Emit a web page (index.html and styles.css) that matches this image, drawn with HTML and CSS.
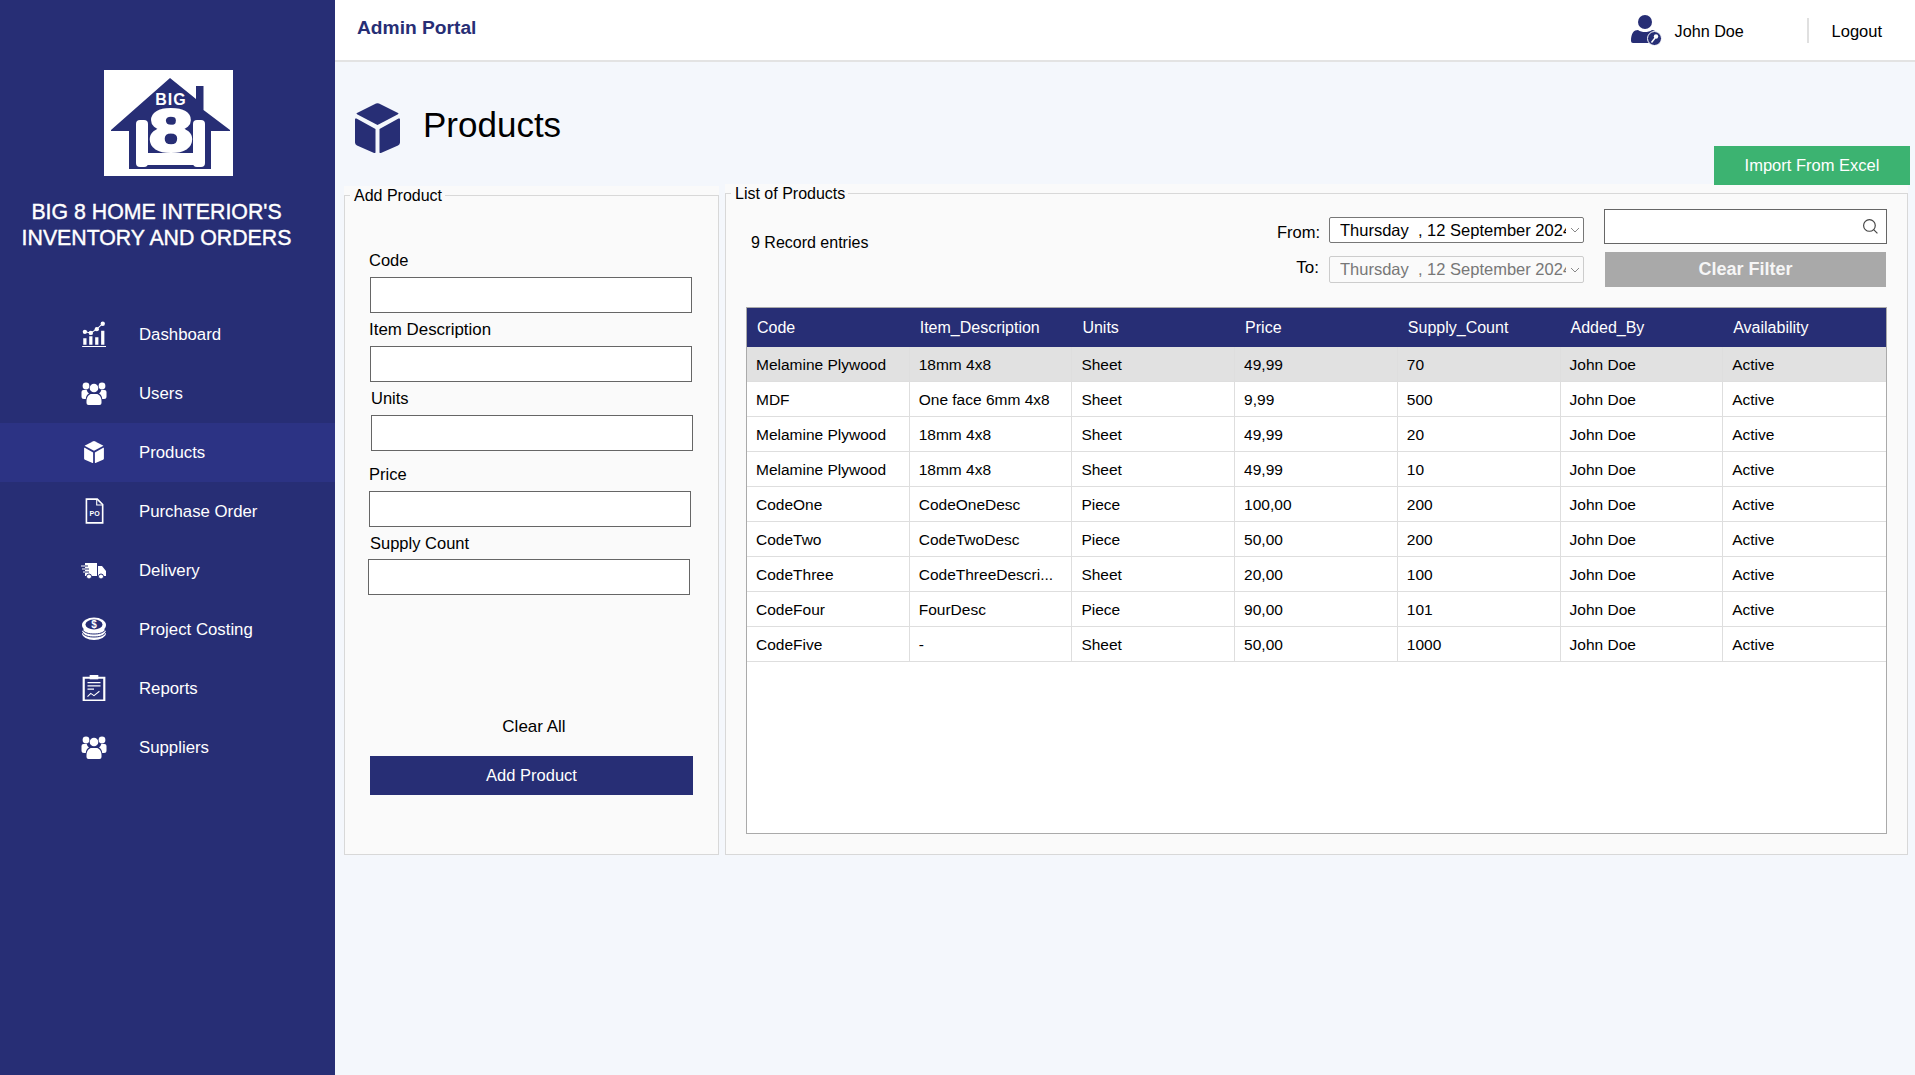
FILE: index.html
```html
<!DOCTYPE html>
<html lang="en">
<head>
<meta charset="utf-8">
<title>Products</title>
<link rel="stylesheet" href="styles.css">
</head>
<body>
<svg class="defs" width="0" height="0" aria-hidden="true">
  <symbol id="cube" viewBox="0 0 45 50">
    <path d="M21 .6a3.5 3.5 0 0 1 3 0L43 10a.7.7 0 0 1 0 1.2L22.500 22 2 11.200A.7.7 0 0 1 2 10z"/>
    <path d="M0 16.500a1 1 0 0 1 1.500-.9L20.500 26v23a1 1 0 0 1-1.400.9L2 42.500Q0 41.500 0 39.500z"/>
    <path d="M45 16.500a1 1 0 0 0-1.500-.9L24.500 26v23a1 1 0 0 0 1.400.9L43 42.500q2-1 2-3z"/>
  </symbol>
  <symbol id="people" viewBox="0 0 26 24">
    <circle cx="5" cy="5" r="3.400"/><circle cx="21" cy="5" r="3.400"/><circle cx="13" cy="7" r="4.300"/>
    <path d="M.5 11a2 2 0 0 1 2-2h3.200a6 6 0 0 0 2.300 3.600c-1.700 1-3 2.500-3.200 5.400H3a2.500 2.500 0 0 1-2.500-2.500z"/>
    <path d="M25.500 11a2 2 0 0 0-2-2h-3.200a6 6 0 0 1-2.300 3.600c1.700 1 3 2.500 3.200 5.400H23a2.500 2.500 0 0 0 2.500-2.500z"/>
    <path d="M5.500 20c0-4.500 3-7 5-7h5c2 0 5 2.500 5 7v2a2 2 0 0 1-2 2h-11a2 2 0 0 1-2-2z"/>
  </symbol>
  <symbol id="chev" viewBox="0 0 10 6"><path d="M1 1l4 4 4-4" fill="none" stroke="currentColor"/></symbol>
</svg>

<aside class="sidebar">
  <div class="logo">
    <svg viewBox="0 0 129 106" width="129" height="106">
      <path class="navy" d="M92 16h7.500v24L126 60v1H107v38H25V61H7v-1L66 8l26 21z"/>
      <rect class="wht" x="32" y="50" width="12" height="47" rx="4"/>
      <rect class="wht" x="89" y="50" width="12" height="47" rx="4"/>
      <rect class="wht" x="40" y="83" width="53" height="12"/>
      <rect class="navy" x="44" y="45" width="45" height="38"/>
      <text class="logo-big" x="67" y="35" text-anchor="middle">BIG</text>
      <text class="logo-8" x="0" y="0" transform="translate(67 81) scale(1.300 1)" text-anchor="middle">8</text>
    </svg>
  </div>
  <h1 class="brand">BIG 8 HOME INTERIOR'S<br>INVENTORY AND ORDERS</h1>
  <nav class="menu">
    <a class="menu-item">
      <svg class="mi mi-dash" viewBox="0 0 24 24"><path d="M2 23h22v1H2zM3 16h3v6H3zM8.500 14h3v8h-3zM14 15h3v7h-3zM19.500 9h3v13h-3z"/><circle cx="4.500" cy="10" r="2"/><circle cx="10" cy="11" r="2"/><circle cx="15.500" cy="7.500" r="2"/><circle cx="21" cy="2.500" r="2"/><path d="M4.500 10L10 11l5.500-3.500L21 2.500" fill="none" stroke="#fff"/></svg>
      <span class="mt">Dashboard</span>
    </a>
    <a class="menu-item">
      <svg class="mi"><use href="#people"/></svg>
      <span class="mt">Users</span>
    </a>
    <a class="menu-item active">
      <svg class="mi mi-cube"><use href="#cube"/></svg>
      <span class="mt">Products</span>
    </a>
    <a class="menu-item">
      <svg class="mi" viewBox="0 0 24 24"><path d="M5 1h10l5 5v17H5z" fill="none" stroke="#fff" stroke-width="1.500"/><path d="M14.500 1v5.500H20" fill="none" stroke="#fff"/><text class="po" x="12.500" y="17" text-anchor="middle">PO</text></svg>
      <span class="mt">Purchase Order</span>
    </a>
    <a class="menu-item">
      <svg class="mi" viewBox="0 0 26 24"><path d="M4 5h12v13H4zM17 8h4l4 5v5h-8z"/><path d="M0 8h7M1 11h7M2 14h6" stroke="#272e75" stroke-width="1"/><path d="M0 8h4M1 11h3M2 14h2" stroke="#fff" stroke-width="1"/><circle cx="8" cy="18.500" r="2.500" stroke="#272e75"/><circle cx="20" cy="18.500" r="2.500" stroke="#272e75"/></svg>
      <span class="mt">Delivery</span>
    </a>
    <a class="menu-item">
      <svg class="mi" viewBox="0 0 26 24"><ellipse cx="13" cy="16" rx="12" ry="7"/><path d="M1 15c2 4 7 5 12 5s10-1 12-5M1 12c2 4 7 5 12 5s10-1 12-5" fill="none" stroke="#272e75"/><ellipse cx="13" cy="8" rx="12" ry="7.500"/><ellipse cx="13" cy="7.500" rx="8.500" ry="5" fill="#272e75"/><text class="dollar" x="13" y="11" text-anchor="middle">$</text></svg>
      <span class="mt">Project Costing</span>
    </a>
    <a class="menu-item">
      <svg class="mi" viewBox="0 0 22 24"><path d="M1.500 2.500h19v21h-19z" fill="none" stroke="#fff" stroke-width="2"/><rect x="7" y="0" width="8" height="4"/><path d="M5 7h12M5 10h12M5 13h6" stroke="#fff" fill="none"/><path d="M5 20l3-3 3 2 5-4" stroke="#fff" fill="none"/></svg>
      <span class="mt">Reports</span>
    </a>
    <a class="menu-item">
      <svg class="mi"><use href="#people"/></svg>
      <span class="mt">Suppliers</span>
    </a>
  </nav>
</aside>

<div class="main">
  <header class="topbar">
    <div class="portal">Admin Portal</div>
    <svg class="user-ic" viewBox="0 0 31 31"><circle cx="14" cy="7" r="7"/><path d="M0 26c0-8 3-11 7-11 2 1.500 4.500 2 7 2s5-.5 7-2c2 0 4 1 6 4l-9 9H2q-2 0-2-2z"/><circle cx="23.500" cy="23.500" r="7" fill="#272e75" stroke="#fff"/><circle cx="25" cy="21.500" r="2.200" fill="#fff"/><path d="M24 23l-3.500 4.500" stroke="#fff" stroke-width="1.500"/></svg>
    <span class="user-name">John Doe</span>
    <span class="divider"></span>
    <a class="logout">Logout</a>
  </header>

  <div class="title-row">
    <svg class="title-ic"><use href="#cube"/></svg>
    <h2 class="title">Products</h2>
    <button class="btn-import">Import From Excel</button>
  </div>

  <div class="panels">
    <section class="panel panel-add">
      <fieldset class="fs">
        <legend>Add Product</legend>
        <form class="form">
          <label class="lbl">Code</label>
          <div class="inp"></div>
          <label class="lbl lbl-item">Item Description</label>
          <div class="inp"></div>
          <label class="lbl lbl-units">Units</label>
          <div class="inp inp-units"></div>
          <label class="lbl lbl-price">Price</label>
          <div class="inp inp-price"></div>
          <label class="lbl lbl-supply">Supply Count</label>
          <div class="inp inp-supply"></div>
          <div class="clear-all">Clear All</div>
          <button type="button" class="btn-add">Add Product</button>
        </form>
      </fieldset>
    </section>

    <section class="panel panel-list">
      <fieldset class="fs">
        <legend>List of Products</legend>
        <div class="toolbar">
          <div class="records">9 Record entries</div>
          <div class="dates">
            <div class="date-row">
              <span class="date-lbl date-lbl-from">From:</span>
              <div class="date"><span class="date-txt">Thursday &nbsp;, 12 September 2024</span><svg class="chev"><use href="#chev"/></svg></div>
            </div>
            <div class="date-row">
              <span class="date-lbl date-lbl-to">To:</span>
              <div class="date date-off"><span class="date-txt">Thursday &nbsp;, 12 September 2024</span><svg class="chev"><use href="#chev"/></svg></div>
            </div>
          </div>
          <div class="filters">
            <div class="search"><svg class="search-ic" viewBox="0 0 16 16"><circle cx="7" cy="7" r="5.500"/><path d="M11 11l3.500 3.500"/></svg></div>
            <button class="btn-clear">Clear Filter</button>
          </div>
        </div>
        <div class="table-box">
          <table class="tbl">
            <thead>
              <tr><th>Code</th><th>Item_Description</th><th>Units</th><th>Price</th><th>Supply_Count</th><th>Added_By</th><th>Availability</th></tr>
            </thead>
            <tbody>
              <tr class="sel"><td>Melamine Plywood</td><td>18mm 4x8</td><td>Sheet</td><td>49,99</td><td>70</td><td>John Doe</td><td>Active</td></tr>
              <tr><td>MDF</td><td>One face 6mm 4x8</td><td>Sheet</td><td>9,99</td><td>500</td><td>John Doe</td><td>Active</td></tr>
              <tr><td>Melamine Plywood</td><td>18mm 4x8</td><td>Sheet</td><td>49,99</td><td>20</td><td>John Doe</td><td>Active</td></tr>
              <tr><td>Melamine Plywood</td><td>18mm 4x8</td><td>Sheet</td><td>49,99</td><td>10</td><td>John Doe</td><td>Active</td></tr>
              <tr><td>CodeOne</td><td>CodeOneDesc</td><td>Piece</td><td>100,00</td><td>200</td><td>John Doe</td><td>Active</td></tr>
              <tr><td>CodeTwo</td><td>CodeTwoDesc</td><td>Piece</td><td>50,00</td><td>200</td><td>John Doe</td><td>Active</td></tr>
              <tr><td>CodeThree</td><td>CodeThreeDescri...</td><td>Sheet</td><td>20,00</td><td>100</td><td>John Doe</td><td>Active</td></tr>
              <tr><td>CodeFour</td><td>FourDesc</td><td>Piece</td><td>90,00</td><td>101</td><td>John Doe</td><td>Active</td></tr>
              <tr><td>CodeFive</td><td>-</td><td>Sheet</td><td>50,00</td><td>1000</td><td>John Doe</td><td>Active</td></tr>
            </tbody>
          </table>
        </div>
      </fieldset>
    </section>
  </div>
</div>
</body>
</html>
```
FILE: styles.css
```css
* { box-sizing: border-box; }
html, body { margin: 0; height: 100%; }
body {
  display: flex;
  height: 1075px;
  overflow: hidden;
  font-family: "Liberation Sans", Arial, sans-serif;
  font-size: 16px;
  color: #000;
  background: #f4f7fc;
}
.defs { position: absolute; }

/* Sidebar */
.sidebar {
  flex: 0 0 335px;
  background: #272e75;
  color: #fff;
  padding-top: 70px;
}
.logo { width: 129px; height: 106px; margin-left: 104px; background: #fff; }
.logo svg { display: block; }
.navy { fill: #272e75; }
.wht { fill: #fff; }
.logo-big { font: bold 16px "Liberation Sans", sans-serif; fill: #fff; letter-spacing: 1px; }
.logo-8 { font: bold 60px "Liberation Sans", sans-serif; fill: #fff; stroke: #fff; stroke-width: 3px; }
.brand {
  margin: 23px 0 0;
  width: 313px;
  text-align: center;
  font-size: 21.300px;
  font-weight: 400;
  line-height: 26px;
  -webkit-text-stroke: .4px #fff;
}
.menu { margin-top: 54px; }
.menu-item {
  display: flex;
  align-items: center;
  height: 58.900px;
  padding-left: 81px;
  font-size: 16.800px;
}
.mt { padding-top: 2px; }
.menu-item.active { background: #2c3384; }
.mi { width: 26px; height: 26px; margin-right: 32px; fill: #fff; flex: none; }
.mi-cube { padding: 2px; }
.mi-dash { transform: translateX(-1px); }
.po { font: bold 6.500px "Liberation Sans", sans-serif; fill: #fff; }
.dollar { font: bold 10px "Liberation Sans", sans-serif; fill: #fff; }

/* Main */
.main { flex: 1; min-width: 0; display: flex; flex-direction: column; }
.topbar {
  display: flex;
  align-items: center;
  height: 62px;
  background: #fff;
  border-bottom: 2px solid #e3e3e3;
  padding-left: 22px;
}
.portal { font-size: 19.200px; font-weight: bold; color: #272e75; margin-top: -4px; margin-right: auto; }
.user-ic { width: 31px; height: 31px; fill: #272e75; margin-right: 13px; }
.user-name { width: 132px; font-size: 16.200px; margin-top: 2px; }
.divider { width: 2px; height: 25px; background: #e0e0e0; margin-right: 23px; }
.logout { font-size: 16.500px; margin-right: 33px; margin-top: 3px; }

.title-row { display: flex; height: 124px; padding-left: 20px; }
.title-ic { width: 45px; height: 50px; margin-top: 41px; fill: #272e75; flex: none; }
.title { margin: 43px 0 0 23px; font-size: 35px; font-weight: 400; line-height: 40px; }
.btn-import {
  position: relative;
  z-index: 1;
  align-self: flex-end;
  margin: 0 5px 1px auto;
  width: 196px;
  height: 39px;
  border: 0;
  background: #3cb371;
  color: #fff;
  font: 16.500px "Liberation Sans", sans-serif;
}

/* Panels */
.panels { display: flex; gap: 6px; height: 669px; padding: 0 7px 0 9px; }
.panel { background: #fafafa; display: flex; }
.panel-add { flex: 0 0 375px; }
.panel-list { flex: 1; min-width: 0; margin-top: -2px; }
.fs { margin: 0; padding: 0; width: 100%; min-width: 0; border: 1px solid #d8d8d8; }
.fs legend { margin-left: 5px; padding: 0 3px 0 4px; font-size: 16px; line-height: 19px; }

/* Add form */
.form { display: flex; flex-direction: column; padding: 45px 0 0 24px; }
.lbl { height: 20px; line-height: 20px; font-size: 16.500px; margin-bottom: 7px; }
.lbl-item { font-size: 16.900px; line-height: 22px; }
.lbl-units { margin-left: 2px; }
.inp { width: 322px; height: 36px; margin-left: 1px; background: #fff; border: 1px solid #666; margin-bottom: 6px; flex: none; }
.inp-units { margin-left: 2px; }
.lbl-price { margin-top: 7px; }
.inp-price { margin-left: 0; }
.lbl-supply { margin-bottom: 6px; margin-left: 1px; }
.inp-supply { margin-left: -1px; }
.clear-all { margin-top: 115px; height: 20px; line-height: 22px; text-align: center; width: 330px; font-size: 17px; }
.btn-add {
  margin: 20px 0 0 1px;
  width: 323px;
  height: 39px;
  border: 0;
  background: #272e75;
  color: #fff;
  font: 16.500px "Liberation Sans", sans-serif;
}

/* List toolbar */
.toolbar { display: flex; height: 104px; padding-right: 20px; }
.records { margin: 30px auto 0 25px; line-height: 20px; font-size: 16px; }
.dates { display: flex; flex-direction: column; gap: 13px; margin-top: 14px; }
.date-row { display: flex; align-items: center; }
.date-lbl { width: 70px; padding-right: 9px; text-align: right; font-size: 16.500px; }
.date-lbl-from { margin-top: 4px; }
.date-lbl-to { margin-bottom: 4px; font-size: 17px; padding-right: 10px; }
.date {
  display: flex;
  align-items: center;
  width: 255px;
  height: 26px;
  background: #fff;
  border: 1px solid #777;
  border-radius: 2px;
  padding: 0 3px 0 10px;
}
.date-off { height: 27px; border-color: #ccc; color: #777; background: #fafafa; }
.date-txt { flex: 1; min-width: 0; overflow: hidden; white-space: nowrap; font-size: 16.500px; }
.chev { width: 10px; height: 6px; margin-left: 4px; color: #888; flex: none; }
.filters { display: flex; flex-direction: column; gap: 8px; margin: 6px 0 0 20px; width: 283px; }
.search {
  display: flex;
  align-items: center;
  justify-content: flex-end;
  height: 35px;
  background: #fff;
  border: 1px solid #666;
  padding-right: 7px;
}
.search-ic { width: 17px; height: 17px; fill: none; stroke: #444; stroke-width: 1.100; }
.btn-clear {
  width: 281px;
  height: 35px;
  margin-left: 1px;
  border: 0;
  background: #a9a9a9;
  color: #f6f6f6;
  font: bold 18px "Liberation Sans", sans-serif;
}

/* Table */
.table-box {
  height: 527px;
  margin: 0 20px 0 20px;
  background: #fff;
  border: 1px solid #aaa;
}
.tbl { width: 100%; border-collapse: separate; border-spacing: 0; table-layout: fixed; }
.tbl th {
  height: 39px;
  padding: 0 0 0 10px;
  background: #272e75;
  color: #fff;
  font-weight: 400;
  font-size: 16px;
  text-align: left;
}
.tbl td {
  height: 35px;
  padding: 1px 0 0 9px;
  border-right: 1px solid #dedede;
  border-bottom: 1px solid #dedede;
  font-size: 15.500px;
  white-space: nowrap;
  overflow: hidden;
}
.tbl td:last-child { border-right: 0; }
.tbl .sel td { background: #e1e1e1; }
```
